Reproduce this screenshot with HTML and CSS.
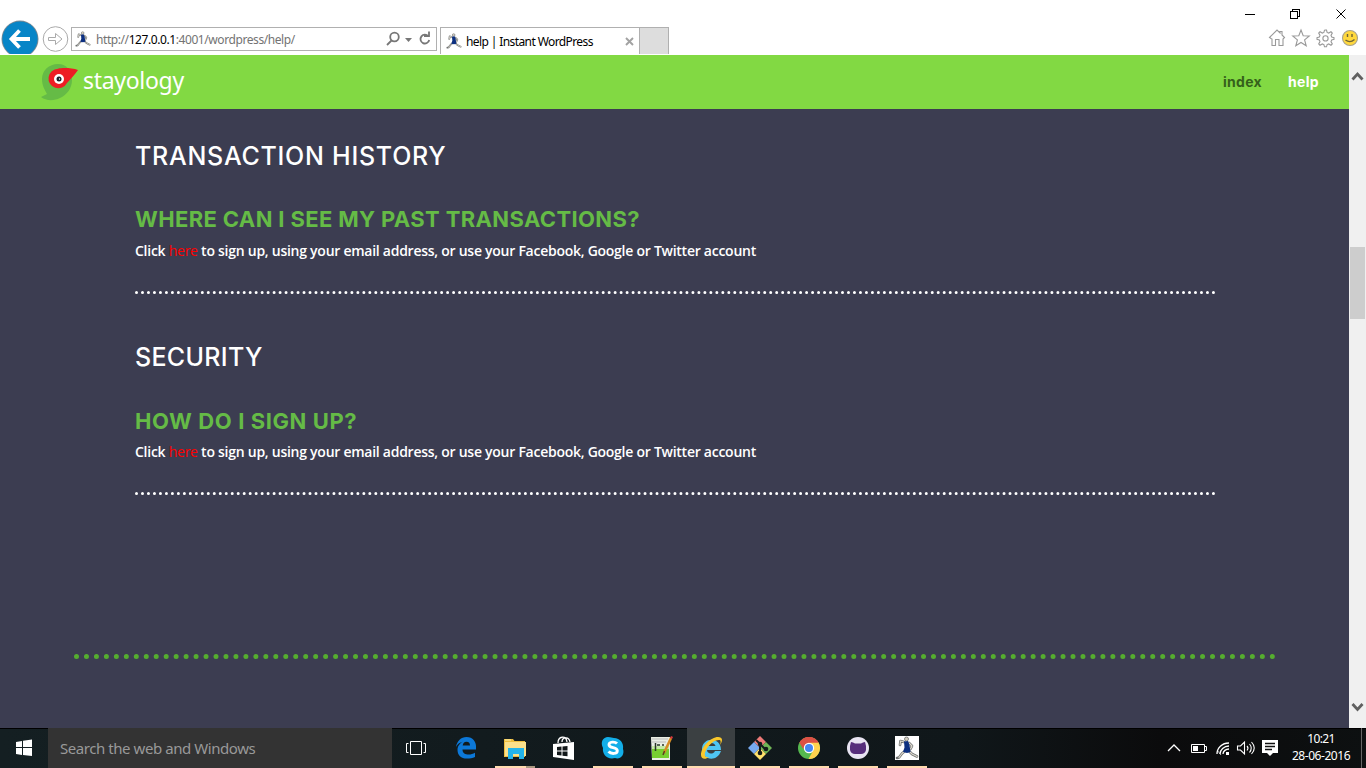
FILE: index.html
```html
<!DOCTYPE html>
<html lang="en">
<head>
<meta charset="utf-8">
<title>help | Instant WordPress</title>
<link rel="stylesheet" href="styles.css">
</head>
<body>
<svg class="defs" aria-hidden="true">
  <symbol id="runner" viewBox="0 0 24 24">
    <g fill="none" stroke-linecap="round" stroke-linejoin="round">
      <g stroke="#6d706f" stroke-width="2.600">
        <path d="M9 6 5.500 5 5 9M14 7l3 3-1.500 3"/>
        <path d="M10 15 7 17.500 4 21.500 2 22M14 15l3 3 5 2.500"/>
      </g>
      <g stroke="#ddd9cf" stroke-width="1.200">
        <path d="M9 6 5.500 5 5 9M14 7l3 3-1.500 3"/>
        <path d="M10 15 7 17.500 4 21.500M14 15l3 3 5 2.500"/>
      </g>
    </g>
    <circle cx="11.500" cy="3" r="2" fill="#d3cec0" stroke="#6d706f" stroke-width=".8"/>
    <path d="m9 5.500 4-.5 1.500 4 1 7-3.500 1-4-1 1.500-4.500z" fill="#0c2f80"/>
  </symbol>
</svg>
<div class="screen">
  <header class="chrome">
    <div class="window-buttons">
      <svg width="116" height="28" viewBox="0 0 116 28" fill="none" stroke="#000" shape-rendering="crispEdges">
        <path d="M5 14.500h10M50.500 11.500h7v7h-7zM52.500 11.500v-2h7v7h-2"/>
        <path d="M96.500 9.500l9 9M105.500 9.500l-9 9" shape-rendering="auto"/>
      </svg>
    </div>
    <div class="toolbar">
      <svg class="nav" width="71" height="34" viewBox="0 20 71 34">
        <circle cx="20" cy="39" r="18.500" fill="#7d8a92"/><circle cx="20" cy="39" r="17.600" fill="#0785c7"/>
        <path d="M30 39H12M19.500 30.500 11.500 39l8 8.500" fill="none" stroke="#fff" stroke-width="3.800"/>
        <circle cx="55.500" cy="39" r="12.300" fill="#fff" stroke="#aaa"/>
        <path d="M48.500 37.500h7v-4l6.500 5.500-6.500 5.500v-4h-7z" fill="none" stroke="#aaa"/>
      </svg>
      <div class="address">
        <svg width="16" height="16"><use href="#runner"/></svg>
        <span class="url">http://<b>127.0.0.1</b>:4001/wordpress/help/</span>
        <svg class="address-tools" width="50" height="20" viewBox="0 0 50 20" fill="none" stroke="#777" stroke-width="1.800">
          <circle cx="9.500" cy="8" r="4.300"/><path d="M6.500 11.500 2 16"/>
          <path d="M20 9h7l-3.500 4z" fill="#777" stroke="none"/>
          <path d="M43.300 7.300A4.400 4.400 0 1 0 44.200 11M39 7h5V2.500"/>
        </svg>
      </div>
      <div class="tab">
        <svg width="16" height="16"><use href="#runner"/></svg>
        <span class="tab-title">help | Instant WordPress</span>
        <svg class="tab-close" width="9" height="9" viewBox="0 0 9 9"><path d="M1 1l7 7M8 1 1 8" stroke="#a2a2a2" stroke-width="1.900"/></svg>
      </div>
      <div class="new-tab"></div>
      <svg class="tools" width="92" height="20" viewBox="0 0 92 20" fill="none" stroke="#999" stroke-width="1.100">
        <path d="M1.500 9.500 9 2l3 3V3.500h2V7l2.500 2.500L15 11v6.500h-4v-6H7.500v6H4V11l-1-.500z"/>
        <path d="m33 2 2.200 5.700 6.100.300-4.700 3.900 1.600 5.900-5.200-3.300-5.200 3.300 1.600-5.900L24.700 8l6.100-.300z"/>
        <path d="m56.500 2.200 1-.2h1l.6 2.400 1.600.7 2.300-1.300 1.300 1.300L63 7.400l.7 1.600 2.300.6v1.800l-2.300.6-.7 1.600 1.300 2.300-1.300 1.300-2.300-1.300-1.600.7-.6 2.200h-2l-.6-2.200-1.600-.7-2.300 1.300-1.300-1.300L52 13.600l-.7-1.600-2.300-.6V9.600l2.300-.6.7-1.600-1.300-2.300L52 3.800l2.300 1.300 1.600-.7z"/><circle cx="57.500" cy="10.400" r="2.600"/>
        <circle cx="82" cy="10" r="7.500" fill="#ffd83d" stroke="#a9a28b"/>
        <path d="M79.500 6v3M84 6v3M77.500 12q4.500 3.500 9-.500" stroke="#6f6437" stroke-width="1.400"/>
      </svg>
    </div>
  </header>

  <div class="viewport">
    <div class="page">
      <div class="site-header">
        <svg class="logo" width="40" height="40" viewBox="0 0 40 40">
          <path d="M19 2C10 2 3 8.500 3 17c0 7 3 11 5 15l-6 3c5 4 13 4 19 1 7-3 12-10 12-18C33 9 28 2 19 2z" fill="#65bb46"/>
          <path d="M39 8c-6-2-15-2.500-20-1.300A9.800 9.800 0 1 0 28 21C32 17 36 12 39 8z" fill="#ed1c24"/>
          <circle cx="20" cy="17" r="5" fill="#fff"/><circle cx="20" cy="17" r="2.500" fill="#17202b"/><circle cx="20.500" cy="17" r=".7" fill="#fff"/>
        </svg>
        <span class="brand">stayology</span>
        <nav class="menu"><a class="menu-index">index</a><a class="menu-help">help</a></nav>
      </div>
      <main class="content">
        <section class="topic">
          <h2 class="topic-title history">TRANSACTION HISTORY</h2>
          <h3 class="question past">WHERE CAN I SEE MY PAST TRANSACTIONS?</h3>
          <p class="answer">Click <a>here</a> to sign up, using your email address, or use your Facebook, Google or Twitter account</p>
          <svg class="dots" width="1080" height="3"><path d="M1.500 1.500H1079"/></svg>
        </section>
        <section class="topic">
          <h2 class="topic-title security">SECURITY</h2>
          <h3 class="question signup">HOW DO I SIGN UP?</h3>
          <p class="answer">Click <a>here</a> to sign up, using your email address, or use your Facebook, Google or Twitter account</p>
          <svg class="dots" width="1080" height="3"><path d="M1.500 1.500H1079"/></svg>
        </section>
      </main>
      <div class="divider"></div>
    </div>
    <div class="scrollbar">
      <svg width="17" height="17" viewBox="0 0 17 17"><path d="M3.500 11.500 8.500 6l5 5.500" transform="translate(0 1)" fill="none" stroke="#606060" stroke-width="2.800"/></svg>
      <div class="thumb"></div>
      <svg class="scroll-down" width="17" height="17" viewBox="0 0 17 17"><path d="M3.500 0 8.500 5.500l5-5.500" transform="translate(0 1)" fill="none" stroke="#606060" stroke-width="2.800"/></svg>
    </div>
  </div>

  <footer class="taskbar">
    <svg class="start" width="48" height="40" viewBox="0 0 48 40"><path d="m16 14 6-1v6h-6zm7-1.200 9-1.300V19h-9zM16 20h6v7l-6-1zm7 0h9v8l-9-1z" fill="#fff"/></svg>
    <div class="search"><span>Search the web and Windows</span></div>
    <svg class="task-view" width="50" height="40" viewBox="0 0 50 40" fill="none" stroke="#fff"><path d="M18.500 13.500h11v13h-11zM16.500 15.500h-2v9h2M31.500 15.500h2v9h-2"/></svg>
    <div class="apps">
      <div class="app"><svg viewBox="0 0 48 40"><path d="M14 19c1-6 5-10 10.500-10C31 9 34 14 34 18v3.500H20.500c0 4 3 5 6 5 2.500 0 4.500-.600 6.500-1.800v4.300c-2.500 1.200-5 1.600-8 1.600-6 0-9.500-3.500-9.500-8.600 0-4 2.300-6.800 5.500-8.200-3.500.500-5.500 2.600-7 5.200zM20.700 17.500h7.300c0-2-1-3.700-3.500-3.700-2.300 0-3.500 1.700-3.800 3.700z" fill="#0c78d8" fill-rule="evenodd"/></svg></div>
      <div class="app open explorer"><svg viewBox="0 0 48 40"><path d="M13 11h9l1.500 2H34v16H13z" fill="#edbd3e"/><path d="M14 14h21v14H14z" fill="#fbe08b"/><path d="M17 31V20h16v11h-5v-5h-6v5z" fill="#24b4e9"/><path d="M14 12h6" stroke="#fff3b2"/></svg></div>
      <div class="app"><svg viewBox="0 0 48 40"><path d="M13 16 34 14v18l-21-3z" fill="#fff"/><path d="M18 15c0-7 8-8 9-1M22 14c0-5 7-6 8 0" fill="none" stroke="#fff" stroke-width="1.300"/><path d="m17 19 4.500-.500v4H17zm5.500-.600 5-.500v4.600h-5zM17 23.500h4.500v4l-4.500-.500zm5.500 0h5v4.800l-5-.600z" fill="#111719"/></svg></div>
      <div class="app open"><svg viewBox="0 0 48 40"><path d="M19 9c3 0 4 1 6 1 6 0 10 5 9 11 2 6-3 11-8 9-8 2-13-4-12-10-3-6 0-11 5-11z" fill="#13aee8"/><path d="M28 15.500c-2-2-8-2-8 1.200 0 4 8.300 2 8.300 6 0 3.500-6.300 3.500-8.800.800" fill="none" stroke="#fff" stroke-width="2.900"/></svg></div>
      <div class="app open"><svg viewBox="0 0 48 40"><path d="M13 9h19v23H14z" fill="#e9eee4"/><path d="M14 21h17v9H14z" fill="#77cf31"/><path d="M14 18h17v3H14z" fill="#c5eaa5"/><path d="M14 11h16M14 14h14" stroke="#bbb"/><path d="M17.500 15v8M19 17h3M24 17h2" stroke="#273626" stroke-width="1.500"/><path d="m33 10-7 15" stroke="#d68d24" stroke-width="2.600"/><path d="m32.500 9 2 1" stroke="#d7383d" stroke-width="2.500"/><path d="m26.500 23-1.500 4" stroke="#5b4022" stroke-width="1.500"/></svg></div>
      <div class="app open active"><svg viewBox="0 0 48 40"><path d="M34 22H20c0 4 6 5 8 1h6c-4 12-19 9-19-2 0-12 19-13 19 1zM20.500 18h8c-1-4-7-4-8 0z" fill="#4fc6f4" fill-rule="evenodd"/><path d="M33 17c3-4 3-8-2-8-7 0-17 10-17 18 0 4 4 5 8 2-10 2 0-17 10-17 2 0 2 2 1 5z" fill="#f9c72b"/></svg></div>
      <div class="app open"><svg viewBox="0 0 48 40"><path d="m24 8 6 6-6 6-6-6z" fill="#ee7a78"/><path d="m18 14 6 6-6 6-6-6z" fill="#76a9ef"/><path d="m30 14 6 6-6 6-6-6z" fill="#70b456"/><path d="m24 20 6 6-6 6-6-6z" fill="#ffe06b"/><path d="m20 12 4 4v11M24 16l6 6" fill="none" stroke="#14191b" stroke-width="2"/><g fill="#14191b"><circle cx="24" cy="16" r="2.300"/><circle cx="24" cy="25" r="2.300"/><circle cx="30" cy="21" r="2.300"/></g></svg></div>
      <div class="app open"><svg viewBox="0 0 48 40"><circle cx="24" cy="20" r="11" fill="#55b84f"/><path d="M14.500 14.500a11 11 0 0 1 19 0L31 20H18z" fill="#dc5145"/><path d="M33.500 14.500A11 11 0 0 1 23.500 31L29 21l-4-6.500z" fill="#ffd34e"/><path d="M14.500 14.500a11 11 0 0 1 19 0H24a6 6 0 0 0-5.500 7z" fill="#dc5145"/><circle cx="24" cy="20" r="5.200" fill="#fff"/><circle cx="24" cy="20" r="4" fill="#4587f4"/></svg></div>
      <div class="app open"><svg viewBox="0 0 48 40"><circle cx="24" cy="20" r="11" fill="#e8e4f2"/><path d="M17 14q2 0 4 1.500h6Q29 14 31 14l1 4v4q-1 4-5 4h-6q-4 0-5-4v-4z" fill="#562d7b"/></svg></div>
      <div class="app open"><svg viewBox="0 0 48 40"><path d="M12 8h24v24H12z" fill="#fff"/><use href="#runner" x="12" y="8" width="24" height="24"/></svg></div>
    </div>
    <svg class="tray" width="120" height="40" viewBox="0 0 120 40" fill="none" stroke="#fff" stroke-width="1.300">
      <path d="m8 23 6-6 6 6"/>
      <path d="M31.500 16.500h13v8h-13zM45 18.500h1.500v4H45" stroke-width="1"/><path d="M33 18h5v5h-5z" fill="#fff" stroke="none"/>
      <path d="M57 26c0-6 5-11 12-11M60 26c0-4 4-8 9-8M63 26c0-3 3-5 6-5"/><path d="M66 24h3v3h-3z" fill="#fff" stroke="none"/><path d="m57 22 4 5" stroke-width=".7"/>
      <path d="M77.500 18h3l4-4v12l-4-4h-3zM87 18q2 2 0 4.500M89.500 16q3.500 4 0 8.500M91.500 14q5.500 6 0 12" stroke-width="1.100"/>
      <path d="M102 12h16v13h-5l-3 3-3-3h-5z" fill="#fff" stroke="none"/><path d="M105 15.500h10M105 18.500h10M105 21.500h7" stroke="#111"/>
    </svg>
    <div class="clock"><span class="time">10:21</span><span class="date">28-06-2016</span></div>
    <div class="show-desktop"></div>
  </footer>
</div>
</body>
</html>
```
FILE: styles.css
```css
* { box-sizing: border-box; }
body { margin: 0; background: #fff; font-family: "Noto Sans", sans-serif; }
svg { display: block; flex: none; }
.defs { display: none; }
.screen { width: 1366px; height: 768px; display: flex; flex-direction: column; overflow: hidden; white-space: nowrap; }
.chrome { height: 55px; flex: none; }
.window-buttons { height: 20px; display: flex; justify-content: flex-end; padding-right: 10px; }
.toolbar { height: 35px; display: flex; align-items: flex-start; }
.address { width: 366px; height: 24px; margin-top: 7px; border: 1px solid #b0b0b0; display: flex; align-items: center; padding: 0 1px 0 3px; }
.url { font-size: 12px; color: #737373; margin-left: 5px; letter-spacing: -.42px; }
.url b { font-weight: 400; color: #000; }
.address-tools { margin-left: auto; }
.tab { width: 200px; height: 27px; margin: 7px 0 0 3px; border: 1px solid #b0b0b0; border-bottom: 0; display: flex; align-items: center; padding: 0 5px 0; }
.tab-title { font-size: 12px; color: #000; margin-left: 4px; letter-spacing: -.6px; }
.tab-close { margin-left: auto; }
.new-tab { width: 29px; height: 27px; margin-top: 7px; background: #ddd; border: 1px solid #b0b0b0; border-width: 1px 1px 0 0; }
.tools { width: 92px; margin: 8px 6px 0 auto; }
.viewport { height: 673px; flex: none; display: flex; }
.page { width: 1349px; background: #3c3d51; }
.site-header { height: 54px; background: #82d943; display: flex; align-items: center; padding: 0 30px 0 39px; }
.logo { margin-top: -1px; }
.brand { color: #fff; font-size: 23px; line-height: 30px; margin: -4px 0 0 4px; letter-spacing: -.3px; }
.menu { margin-left: auto; display: flex; gap: 26px; font: 700 14px/20px Inter, sans-serif; letter-spacing: .3px; }
.menu-index { color: #35611b; width: 39px; }
.menu-help { color: #fff; width: 31px; }
.content { padding: 31px 134px 0 135px; height: 545px; }
.topic { height: 201px; display: flex; flex-direction: column; }
.dots { margin-top: 29px; stroke: #fff; stroke-width: 3; stroke-linecap: round; stroke-dasharray: 0 5.983; }
.topic-title { margin: 0; height: 63px; font: 500 25px/32px Inter, sans-serif; color: #fff; }
.history { letter-spacing: .74px; }
.security { letter-spacing: .3px; }
.question { margin: 0; height: 37px; font: 700 22px/32px Inter, sans-serif; color: #65bb46; }
.past { letter-spacing: .36px; }
.signup { letter-spacing: .6px; padding-top: 1px; }
.answer { margin: 0; height: 22px; font: 600 14px/22px "Open Sans", sans-serif; letter-spacing: -.26px; color: #fff; }
.answer a { color: #f00; font-weight: 400; }
.divider { width: 1202px; margin: 0 0 0 74px; border-top: 5px dotted #55ad2f; }
.scrollbar { width: 17px; background: #f0f0f0; display: flex; flex-direction: column; padding: 12px 0 8px; }
.thumb { width: 15px; height: 72px; background: #cdcdcd; margin: 163px 0 0 1px; }
.scroll-down { margin-top: auto; }
.taskbar { height: 40px; flex: none; display: flex; background: linear-gradient(90deg, #141f22, #10171a 70%, #0b0b0c 85%, #0d1011); box-shadow: inset 0 1px #000; }
.search { width: 344px; background: #333; color: #999; font-size: 15px; letter-spacing: -.44px; line-height: 41px; padding-left: 12px; }
.apps { display: flex; gap: 1px; }
.app { width: 48px; height: 40px; padding: 0 4px; display: flex; flex-direction: column; }
.app svg { width: 48px; height: 40px; margin-left: -4px; }
.open::after { content: ""; height: 2px; margin-top: -2px; flex: none; background: #ffdbaf; }
.explorer::after { background: linear-gradient(90deg, #ffdbaf 31px, #a99880 31px); }
.active { background: #3b4042; padding: 0; }
.active svg { margin-left: 0; }
.tray { margin: 0 1px 0 auto; }
.clock { width: 80px; display: flex; flex-direction: column; align-items: center; color: #fff; font-size: 12px; line-height: 17px; padding: 2px 0 0; }
.time { letter-spacing: -.6px; }
.date { letter-spacing: -.45px; }
.show-desktop { width: 5px; border-left: 1px solid #666; }
```
